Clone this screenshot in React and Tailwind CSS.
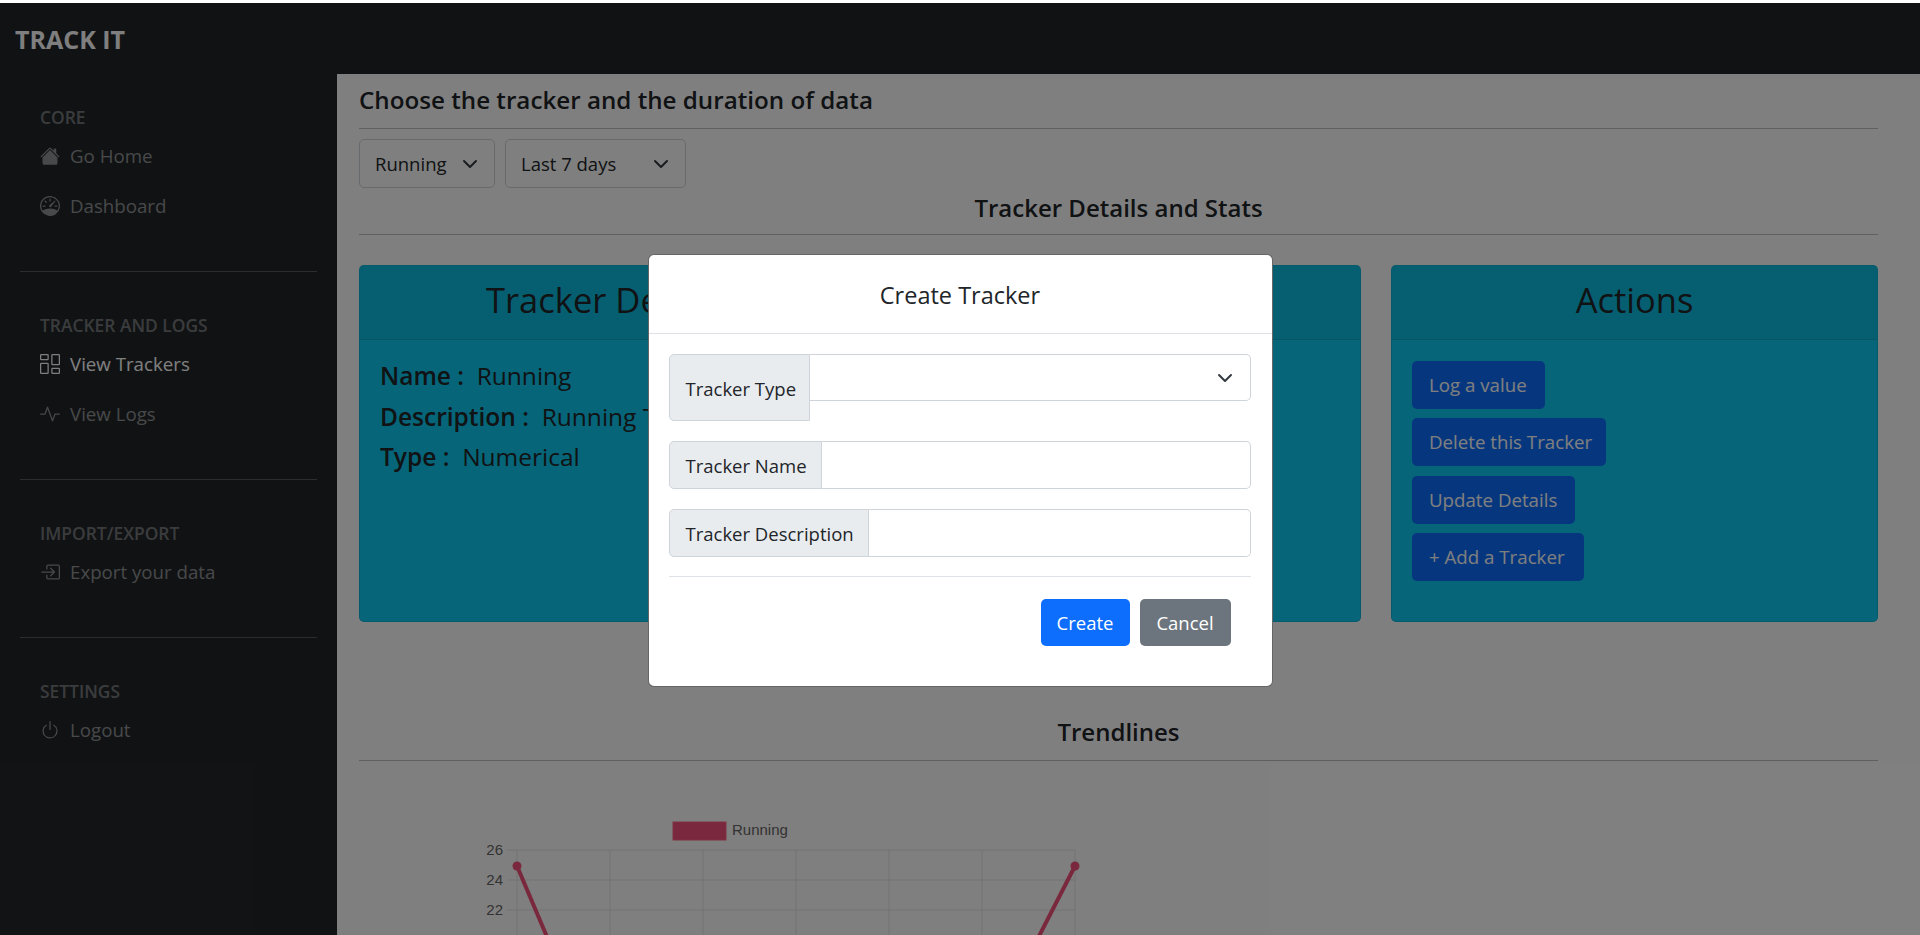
import { BsHouseFill, BsSpeedometer, BsColumnsGap, BsActivity, BsBoxArrowInRight, BsPower } from "react-icons/bs";

const sections = [
  { label: "CORE", labelTop: "mt-[33px]", items: [
    { name: "Go Home", icon: BsHouseFill },
    { name: "Dashboard", icon: BsSpeedometer },
  ] },
  { label: "TRACKER AND LOGS", labelTop: "mt-[44px]", items: [
    { name: "View Trackers", icon: BsColumnsGap, active: true },
    { name: "View Logs", icon: BsActivity },
  ] },
  { label: "IMPORT/EXPORT", labelTop: "mt-[44px]", items: [
    { name: "Export your data", icon: BsBoxArrowInRight },
  ] },
  { label: "SETTINGS", labelTop: "mt-[44px]", items: [
    { name: "Logout", icon: BsPower },
  ] },
];

function Chevron() {
  return (
    <svg viewBox="0 0 16 16" className="w-4 h-4 shrink-0" fill="none" stroke="#343a40" strokeWidth="2" strokeLinecap="round" strokeLinejoin="round">
      <path d="m2 5 6 6 6-6" />
    </svg>
  );
}

function Sidebar() {
  return (
    <aside className="w-[337px] shrink-0 bg-[#212529]">
      {sections.map((s, i) => (
        <div key={s.label}>
          <div className={`${s.labelTop} pl-[40px] text-[17.4px] leading-[20px] font-semibold text-white/40`}>{s.label}</div>
          <div className="mt-[14px] flex flex-col gap-[20px] pl-[40px]">
            {s.items.map(item => (
              <div key={item.name} className={`flex items-center h-[30px] text-[18.7px] ${item.active ? "text-white" : "text-white/50"}`}>
                <item.icon className="w-5 h-5 mr-[10px]" />
                {item.name}
              </div>
            ))}
          </div>
          {i < sections.length - 1 && <div className="mt-[50px] mb-[-1px] mx-[20px] h-px bg-white/25" />}
        </div>
      ))}
    </aside>
  );
}

function Chart() {
  const xs = [517, 610, 703, 796, 889, 982, 1075];
  const ys = [[849, "26"], [879, "24"], [909, "22"], [939, "20"]];
  return (
    <svg viewBox="337 770 800 165" className="block mt-[10px] w-[800px] h-[165px] -ml-[22px]">
      <rect x="673" y="821" width="53" height="18" fill="#f4517a" stroke="#ff6384" />
      <text x="732" y="834" fontSize="15" fill="#666" fontFamily="Liberation Sans">Running</text>
      {xs.map(x => <line key={x} x1={x} x2={x} y1="849" y2="935" stroke="#e6e6e6" />)}
      {ys.map(([y, t]) => (
        <g key={t}>
          <line x1="507" x2="1075" y1={y} y2={y} stroke="#e6e6e6" />
          <text x="503" y={y + 5} fontSize="15" textAnchor="end" fill="#666" fontFamily="Liberation Sans">{t}</text>
        </g>
      ))}
      <path d="M517 865 L550 943" stroke="#f4517a" strokeWidth="4" fill="none" />
      <path d="M1075 865 L1035 943" stroke="#f4517a" strokeWidth="4" fill="none" />
      <circle cx="517" cy="865" r="4.5" fill="#f4517a" />
      <circle cx="1075" cy="865" r="4.5" fill="#f4517a" />
    </svg>
  );
}

function Modal() {
  return (
    <div className="absolute inset-0 flex justify-center items-start pt-[251px]">
      <div className="w-[625px] h-[433px] bg-white border border-black/60 rounded-[6px] text-[#212529]">
        <div className="h-[79px] flex items-center justify-center pt-[3px] border-b border-[#dee2e6] text-[23.5px] font-medium">Create Tracker</div>
        <div className="pl-[20px] pr-[21px] pt-[20px]">
          <div className="flex items-start">
            <span className="w-[141px] h-[67px] pl-[16px] pt-[19px] bg-[#e9ecef] border border-[#ced4da] rounded-l-[5px] text-[18.5px] leading-[30px]">Tracker Type</span>
            <div className="flex-1 h-[47px] flex items-center justify-end pr-[17px] border border-l-0 border-[#ced4da] rounded-r-[5px]">
              <Chevron />
            </div>
          </div>
          <div className="flex mt-[20px] h-[48px]">
            <span className="flex items-center w-[153px] pl-[16px] pt-[2px] bg-[#e9ecef] border border-[#ced4da] rounded-l-[5px] text-[18.5px]">Tracker Name</span>
            <div className="flex-1 border border-l-0 border-[#ced4da] rounded-r-[5px]" />
          </div>
          <div className="flex mt-[20px] h-[48px]">
            <span className="flex items-center w-[200px] pl-[16px] pt-[2px] bg-[#e9ecef] border border-[#ced4da] rounded-l-[5px] text-[18.5px]">Tracker Description</span>
            <div className="flex-1 border border-l-0 border-[#ced4da] rounded-r-[5px]" />
          </div>
          <div className="mt-[19px] h-px bg-[#dee2e6]" />
          <div className="flex justify-end gap-[10px] mt-[22px] pr-[20px]">
            <button className="w-[89px] h-[47px] rounded-[5px] bg-[#0d6efd] text-white text-[18.5px]">Create</button>
            <button className="w-[91px] h-[47px] rounded-[5px] bg-[#6c757d] text-white text-[18.5px]">Cancel</button>
          </div>
        </div>
      </div>
    </div>
  );
}

function ActionBtn({ w, top, children }) {
  return (
    <button className={`${w} ${top} block h-[48px] rounded-[5px] bg-[#0d6efd] text-white text-[18.7px] text-left pl-[17px]`}>{children}</button>
  );
}

export default function App() {
  return (
    <div className="h-[935px] overflow-hidden bg-white" style={{ fontFamily: '"Open Sans", sans-serif' }}>
      <div className="h-[3px] bg-white" />
      <div className="relative h-[932px] overflow-hidden">
        <nav className="h-[71px] bg-[#212529] flex items-center pl-[15px] pt-[3px]">
          <span className="text-[25px] font-bold text-white">TRACK IT</span>
        </nav>
        <div className="flex h-[861px]">
          <Sidebar />
          <main className="flex-1 min-w-0 pl-[22px] pr-[42px] text-[#212529]">
            <h4 className="text-[24.2px] leading-[30px] font-semibold pt-[11px]">Choose the tracker and the duration of data</h4>
            <div className="mt-[13px] h-px bg-black/25" />
            <div className="flex gap-[10px] mt-[10px]">
              <div className="w-[136px] h-[49px] border border-[#ced4da] rounded-[5px] flex items-center justify-between pl-[15px] pr-[16px] text-[18.5px]">Running <Chevron /></div>
              <div className="w-[181px] h-[49px] border border-[#ced4da] rounded-[5px] flex items-center justify-between pl-[15px] pr-[16px] text-[18.5px]">Last 7 days <Chevron /></div>
            </div>
            <h5 className="text-center text-[24px] leading-[30px] font-semibold mt-[5px]">Tracker Details and Stats</h5>
            <div className="mt-[11px] h-px bg-black/25" />
            <div className="flex gap-[30px] mt-[30px]">
              <div className="w-[1002px] h-[357px] bg-[#0dcaf0] rounded-[5px] border border-black/10">
                <div className="h-[74px] bg-black/5 border-b border-black/10 pl-[126px] pb-[6px] flex items-center text-[34.5px] font-medium">Tracker Details</div>
                <div className="pl-[20px] pt-[16px] text-[24.5px] leading-[40.5px]">
                  <div><b className="font-semibold">Name :</b>&nbsp; Running</div>
                  <div><b className="font-semibold">Description :</b>&nbsp; Running Tracker</div>
                  <div><b className="font-semibold">Type :</b>&nbsp; Numerical</div>
                </div>
              </div>
              <div className="w-[487px] h-[357px] bg-[#0dcaf0] rounded-[5px] border border-black/10">
                <div className="h-[74px] bg-black/5 border-b border-black/10 pb-[6px] flex items-center justify-center text-[34.5px] font-medium">Actions</div>
                <div className="pl-[20px] pt-[21px]">
                  <ActionBtn w="w-[133px]">Log a value</ActionBtn>
                  <ActionBtn w="w-[194px]" top="mt-[9px]">Delete this Tracker</ActionBtn>
                  <ActionBtn w="w-[163px]" top="mt-[10px]">Update Details</ActionBtn>
                  <ActionBtn w="w-[172px]" top="mt-[9px]">+ Add a Tracker</ActionBtn>
                </div>
              </div>
            </div>
            <h5 className="text-center text-[24px] leading-[30px] font-semibold mt-[95px]">Trendlines</h5>
            <div className="mt-[13px] h-px bg-black/25" />
            <Chart />
          </main>
        </div>
        <div className="absolute inset-0 bg-black/50" />
        <Modal />
      </div>
    </div>
  );
}
